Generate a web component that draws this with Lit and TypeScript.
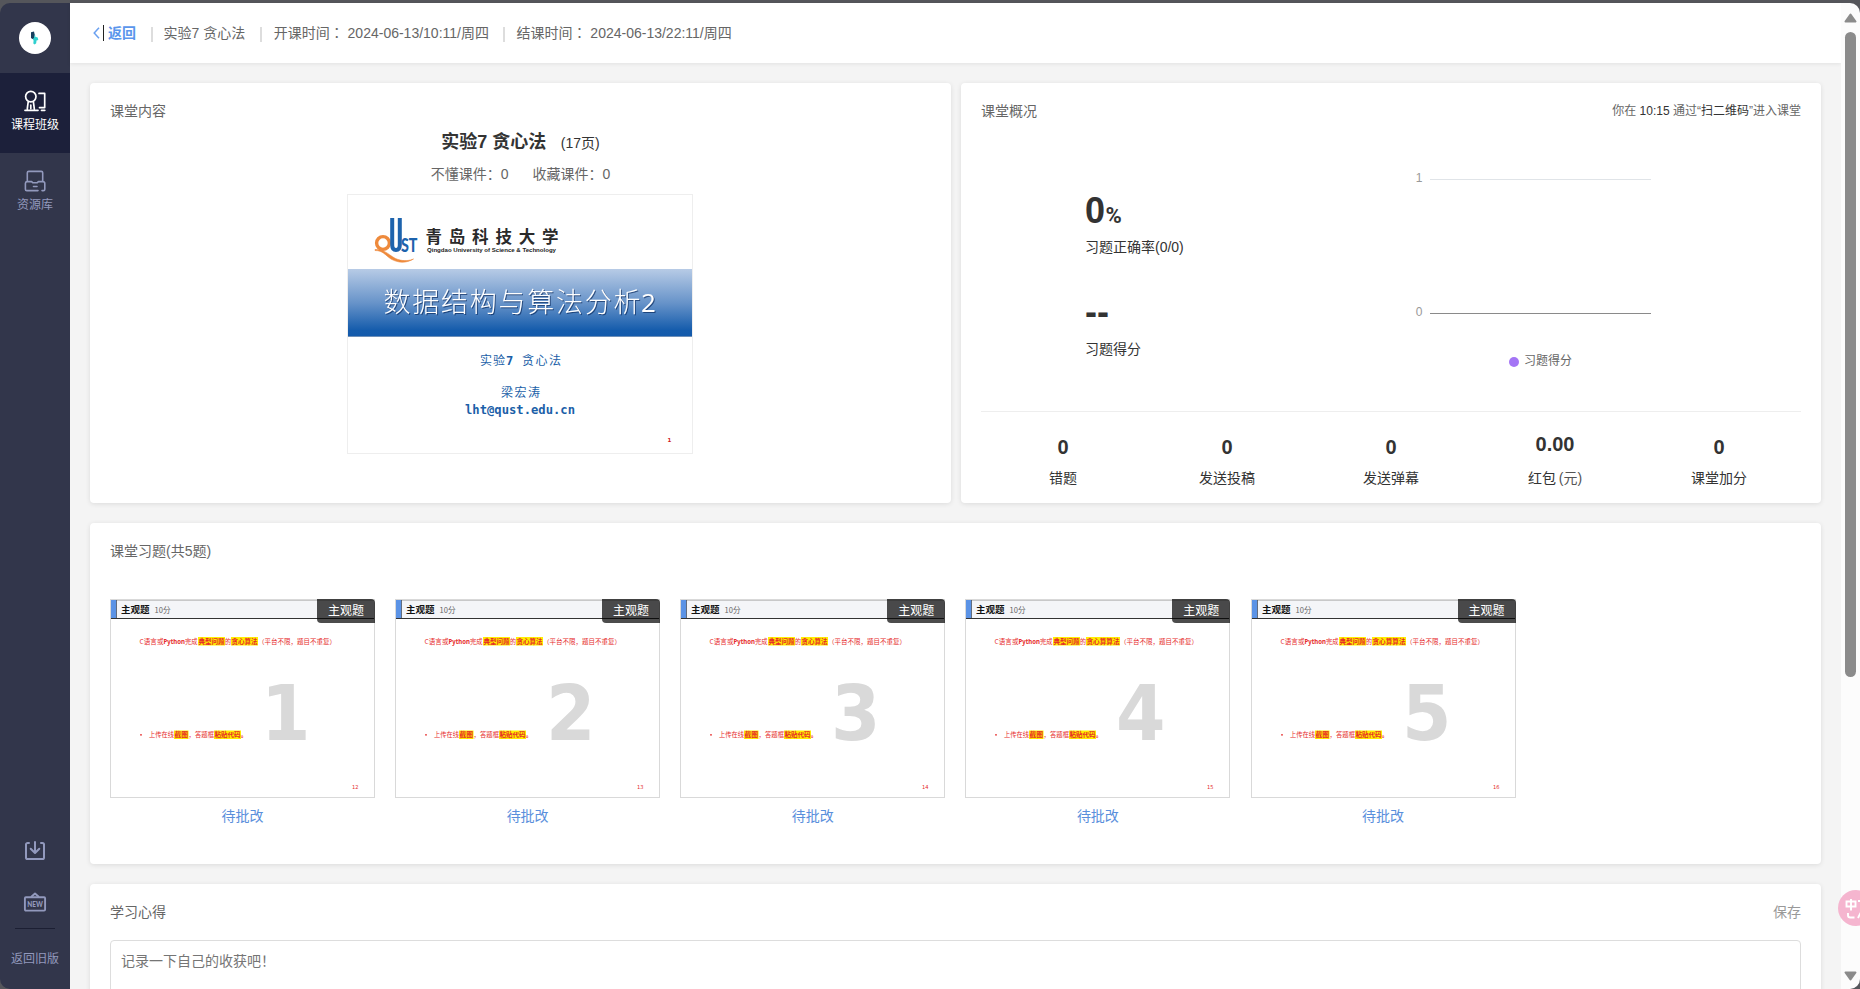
import { LitElement, html, css, svg } from "lit";
import { customElement, property } from "lit/decorators.js";

interface Exercise {
  no: number;
  page: number;
  topic: string;
}

const exercises: Exercise[] = [
  { no: 1, page: 12, topic: "贪心算法" },
  { no: 2, page: 13, topic: "贪心算法" },
  { no: 3, page: 14, topic: "贪心算法" },
  { no: 4, page: 15, topic: "贪心算算法" },
  { no: 5, page: 16, topic: "贪心算算法" },
];

const stats = [
  { value: "0", label: "错题" },
  { value: "0", label: "发送投稿" },
  { value: "0", label: "发送弹幕" },
  { value: "0.00", label: "红包", unit: "(元)" },
  { value: "0", label: "课堂加分" },
];

@customElement("side-bar")
class SideBar extends LitElement {
  static styles = css`
    :host {
      display: flex;
      flex-direction: column;
      align-items: center;
      width: 70px;
      flex: none;
      background: #32364b;
      border-radius: 10px 0 0 10px;
      overflow: hidden;
      color: #9299bd;
      font-size: 12px;
      line-height: 16px;
    }
    svg { display: block; }
    .logo { height: 70px; display: flex; align-items: center; }
    .item {
      width: 70px;
      height: 80px;
      box-sizing: border-box;
      padding-top: 16px;
      display: flex;
      flex-direction: column;
      align-items: center;
      gap: 4px;
    }
    .item.active { background: #1c203a; color: #fff; }
    .bottom {
      margin-top: auto;
      display: flex;
      flex-direction: column;
      align-items: center;
      padding-bottom: 22px;
    }
    .new { margin-top: 29px; }
    .rule { width: 40px; height: 1px; background: #1c1f33; margin: 14px 0 22px; }
  `;
  render() {
    return html`
      <div class="logo">
        <svg width="32" height="32" viewBox="0 0 32 32">
          <circle cx="16" cy="16" r="16" fill="#fff" />
          <path d="M12 10.200l3-.700.800 3.500-.800 3.800-1.500.200-1.500-1z" fill="#173f5f" />
          <path d="M16 12l.300 2.800 2.400.700.600 2.500-1.800.500-.300 2.700-1.500 1.300-1.400-1 .300-3-1-1.500 1.200-.700z" fill="#2fd0cf" />
        </svg>
      </div>
      <div class="item active">
        <svg width="24" height="24" viewBox="0 0 24 24" fill="none" stroke="currentColor" stroke-width="1.700" stroke-linecap="round" stroke-linejoin="round">
          <circle cx="7.800" cy="7.600" r="5.200" />
          <path d="M5.200 12.800Q4.600 17 4.300 19.800M10.400 12.800Q11 17 11.300 19.800M7.800 16v3.500M2 21.300h13M16 4.400h5.700v14.200h-5.200M18.500 21.300h3.300" />
        </svg>
        <span>课程班级</span>
      </div>
      <div class="item">
        <svg width="24" height="24" viewBox="0 0 24 24" fill="none" stroke="currentColor" stroke-width="1.600" stroke-linecap="round" stroke-linejoin="round">
          <path d="M4.300 12.600V3.800a1.400 1.400 0 0 1 1.400-1.400h12.600a1.400 1.400 0 0 1 1.400 1.400v8.800M4 12.600h4.600l1.400 1.200h4l1.400-1.200H20a1.800 1.800 0 0 1 1.800 1.800v5.800a1.400 1.400 0 0 1-1.400 1.400h-1.400M15 21.600H3.800a1.400 1.400 0 0 1-1.400-1.400v-5.800A1.800 1.800 0 0 1 4 12.600M10.500 17.500h3.500" />
        </svg>
        <span>资源库</span>
      </div>
      <div class="bottom">
        <svg width="22" height="22" viewBox="0 0 22 22" fill="none" stroke="currentColor" stroke-width="2" stroke-linecap="round" stroke-linejoin="round">
          <path d="M5 3H3.600A1.600 1.600 0 0 0 2 4.600V17.400A1.600 1.600 0 0 0 3.600 19H18.400A1.600 1.600 0 0 0 20 17.400V4.600A1.600 1.600 0 0 0 18.400 3H17M11 2v10.500M6.700 8.700l4.300 4.300 4.300-4.300" />
        </svg>
        <svg class="new" width="24" height="23" viewBox="0 0 24 23">
          <g fill="none" stroke="currentColor" stroke-width="1.900" stroke-linejoin="round">
            <rect x="1.900" y="6.200" width="20.200" height="13.400" rx="1" />
            <path d="M8 6l4-3.500L16 6" />
          </g>
          <text x="4.200" y="15.600" textLength="15.600" lengthAdjust="spacingAndGlyphs" font-family="Lato, sans-serif" font-size="7.600" font-weight="900" fill="currentColor">NEW</text>
        </svg>
        <div class="rule"></div>
        <span>返回旧版</span>
      </div>
    `;
  }
}

@customElement("cover-slide")
class CoverSlide extends LitElement {
  static styles = css`
    :host { display: block; width: 344px; height: 258px; border: 1px solid #eee; background: #fff; margin-right: 1px; }
    svg { display: block; }
    .kai { font-family: "KaiTi", "Noto Sans CJK SC", sans-serif; }
    .deep { fill: #1b5fa8; }
    .title { fill: #fff; filter: drop-shadow(1px 1px 0.500px rgba(0, 30, 80, 0.600)); }
    .light { font-weight: 300; }
  `;
  render() {
    return html`
      <svg width="344" height="258" viewBox="0 0 344 258">
        <defs>
          <linearGradient id="band" x1="0" y1="0" x2="0" y2="1">
            <stop offset="0" stop-color="#b7cbe6" />
            <stop offset="0.500" stop-color="#6793c9" />
            <stop offset="0.900" stop-color="#155cac" />
            <stop offset="1" stop-color="#135aab" />
          </linearGradient>
        </defs>
        <g fill="none">
          <circle cx="35" cy="48" r="6.400" stroke="#ee8a3c" stroke-width="3.400" />
          <path d="M27 54.500C38 54 42 62 50 64.500 56 66.500 62 65.500 65.500 64 58 68.500 50 68 43 64 37 60 35 55.500 27 55.500z" fill="#ee8a3c" stroke="#ee8a3c" stroke-width=".600" />
          <path d="M44.200 23v27q0 5 3.800 5t3.800-5V23" stroke="#1d63ad" stroke-width="4" />
        </g>
        <text x="53" y="56.500" textLength="16.500" lengthAdjust="spacingAndGlyphs" font-family="Lato, sans-serif" font-weight="900" font-size="19" fill="#1d63ad">ST</text>
        <text class="kai" x="77.500" y="47.500" textLength="133" font-size="16.500" font-weight="700" fill="#2a2a2a">青岛科技大学</text>
        <text x="79" y="56.500" textLength="129" lengthAdjust="spacingAndGlyphs" font-family="Liberation Sans, sans-serif" font-weight="700" font-size="5.200" fill="#222">Qingdao University of Science &amp; Technology</text>
        <rect y="74" width="344" height="68" fill="url(#band)" />
        <rect y="141" width="344" height="1" fill="#6d8fb8" />
        <text class="kai title light" x="35.500" y="116.500" textLength="257" font-size="27">数据结构与算法分析</text>
        <text class="title" x="293" y="117" font-family="Open Sans, sans-serif" font-weight="400" font-size="26">2</text>
        <g class="deep kai" font-size="12">
          <text x="132" y="170" textLength="25">实验</text>
          <text x="158" y="170" textLength="7.300" lengthAdjust="spacingAndGlyphs" font-family="DejaVu Sans Mono, monospace" font-weight="700" font-size="12">7</text>
          <text x="174" y="170" textLength="39">贪心法</text>
          <text x="153" y="202" textLength="39">梁宏涛</text>
        </g>
        <text class="deep" x="117" y="218.500" textLength="110" lengthAdjust="spacingAndGlyphs" font-family="DejaVu Sans Mono, monospace" font-weight="700" font-size="12.500">lht@qust.edu.cn</text>
        <text x="319.500" y="247" font-family="DejaVu Sans, sans-serif" font-weight="700" font-size="5.500" fill="#d02020">1</text>
      </svg>
    `;
  }
}

@customElement("exercise-card")
class ExerciseCard extends LitElement {
  static styles = css`
    :host { display: flex; flex-direction: column; width: 265px; }
    .thumb { position: relative; height: 199px; box-sizing: border-box; border: 1px solid #d9d9d9; }
    svg { display: block; }
    .badge {
      position: absolute;
      top: -1px;
      right: -1px;
      width: 58px;
      height: 24px;
      box-sizing: border-box;
      line-height: 24px;
      text-align: center;
      font-size: 12px;
      color: #fff;
      background: rgba(0, 0, 0, 0.700);
      border-radius: 0 4px 0 4px;
    }
    .cjk { font-family: "Noto Sans CJK SC", sans-serif; }
    .red { fill: #e62a2a; }
    .mark { fill: #ffee00; }
    .state { margin-top: 9px; line-height: 18px; text-align: center; font-size: 14px; color: #5a8fdc; }
  `;
  @property({ attribute: false }) item!: Exercise;
  render() {
    const { no, page, topic } = this.item;
    const extra = (topic.length - 4) * 7;
    const seg = (x: number, y: number, w: number, t: string, bold = false) => svg`
      <text x=${x} y=${y} textLength=${w} lengthAdjust="spacingAndGlyphs" font-weight=${bold ? 700 : 400}>${t}</text>`;
    return html`
      <div class="thumb">
        <svg width="263" height="197" viewBox="0 0 263 197">
          <rect width="263" height="197" fill="#fff" />
          <rect width="263" height="18" fill="#f4f5f8" />
          <rect width="263" height="1" fill="#aaa" opacity=".6" />
          <rect y="18" width="263" height="1" fill="#333" />
          <rect width="5.500" height="18" fill="#5b93e6" />
          <rect x="5" width="1" height="19" fill="#333" opacity=".6" />
          <g class="cjk">
            <text x="10" y="12.500" textLength="28.500" lengthAdjust="spacingAndGlyphs" font-size="9.500" font-weight="700" fill="#111">主观题</text>
            <text x="43.500" y="13" textLength="16" lengthAdjust="spacingAndGlyphs" font-size="8" fill="#666">10分</text>
          </g>
          <rect class="mark" x="87" y="37" width="27" height="8.500" />
          <rect class="mark" x="120" y="37" width=${27 + extra} height="8.500" />
          <rect class="mark" x="63" y="130.500" width="14.500" height="8.500" />
          <rect class="mark" x="103" y="130.500" width="27" height="8.500" />
          <g class="cjk red" font-size="6.300">
            ${seg(28.5, 43.5, 24, "C语言或")}
            <text x="52.500" y="43.500" textLength="21.500" lengthAdjust="spacingAndGlyphs" font-family="Noto Sans, sans-serif" font-weight="700">Python</text>
            ${seg(74, 43.5, 12.5, "完成")}
            ${seg(87.5, 43.5, 26, "典型问题", true)}
            ${seg(114, 43.5, 6, "的")}
            ${seg(120.5, 43.5, 26 + extra, topic, true)}
            ${seg(147 + extra, 43.5, 78, "（平台不限，题目不重复）")}
            <circle cx="30" cy="134.800" r=".9" />
            ${seg(38, 137, 25, "上传在线")}
            ${seg(63.5, 137, 13.5, "截图", true)}
            ${seg(77.5, 137, 25.5, "，答题框")}
            ${seg(103.5, 137, 26, "粘贴代码", true)}
            ${seg(130, 137, 6, "。", true)}
          </g>
          <text x="150" y="140" textLength="49.500" lengthAdjust="spacingAndGlyphs" font-family="DejaVu Sans, sans-serif" font-weight="700" font-size="77" fill="#d9d9d9">${no}</text>
          <text x="241" y="189" textLength="6.500" lengthAdjust="spacingAndGlyphs" font-family="DejaVu Sans, sans-serif" font-size="5.500" class="red">${page}</text>
        </svg>
        <div class="badge">主观题</div>
      </div>
      <div class="state">待批改</div>
    `;
  }
}

@customElement("app-root")
class AppRoot extends LitElement {
  static styles = css`
    :host {
      display: flex;
      width: 1860px;
      height: 989px;
      box-sizing: border-box;
      padding-top: 3px;
      overflow: hidden;
      position: relative;
      background: #55565b;
      font-family: "Liberation Sans", "Noto Sans CJK SC", sans-serif;
      font-size: 14px;
      line-height: 18px;
      color: #333;
    }
    svg { display: block; }
    .main { width: 1771px; display: flex; flex-direction: column; background: #f4f4f4; }
    header {
      height: 60px;
      flex: none;
      display: flex;
      align-items: center;
      box-sizing: border-box;
      padding: 0 23px;
      background: #fff;
      color: #666;
      box-shadow: 0 1px 4px rgba(0, 0, 0, 0.080);
      white-space: pre;
    }
    .caret { width: 1px; height: 16px; background: #222; margin: 0 4px 0 3px; }
    .back { font-weight: 700; color: #5a96ec; }
    .sep { width: 2px; height: 15px; background: #ddd; margin: 3px 11px 0 14.500px; }
    .sep.wide { margin-left: 15px; margin-right: 11.500px; }
    .colon { font-family: "Noto Sans CJK TC", sans-serif; line-height: 1; }
    .content { padding: 20px; display: flex; flex-direction: column; gap: 20px; }
    .row { display: grid; grid-template-columns: 861px 860px; grid-template-rows: 420px; gap: 10px; }
    .card {
      background: #fff;
      border-radius: 4px;
      box-shadow: 0 1px 5px rgba(0, 0, 0, 0.100);
      box-sizing: border-box;
      padding: 20px;
    }
    .head { display: flex; justify-content: space-between; color: #666; height: 18px; line-height: 16px; }
    .entry { font-size: 12px; }
    .entry b { font-weight: 400; color: #333; }
    .lesson { display: flex; flex-direction: column; align-items: center; }
    .name { display: flex; align-items: baseline; gap: 14.500px; margin-top: 10px; line-height: 22px; height: 24px; }
    .name strong { font-size: 18px; }
    .marks { display: flex; gap: 24px; margin: 11px 0 10px; line-height: 16px; height: 18px; color: #666; }
    .overview { display: flex; height: 290px; border-bottom: 1px solid #eee; }
    .scores { width: 420px; box-sizing: border-box; padding: 70px 0 0 104px; }
    .big { font: 700 36px/40px "Liberation Sans", sans-serif; height: 40px; }
    .big small { font: 700 22px "Roboto", sans-serif; margin-left: 0.500px; }
    .scores p { margin: 7px 0 36px; }
    .scores p.last { margin-top: 8px; }
    .stats { display: grid; grid-template-columns: repeat(5, 1fr); text-align: center; padding-top: 23px; }
    .stats b { display: block; font-size: 20px; line-height: 24px; height: 24px; }
    .stats .money b { margin-top: -3px; height: 27px; }
    .stats span { display: block; margin-top: 10px; }
    .stats i { font-style: normal; color: #555; margin-left: -1px; }
    .exercises { height: 341px; }
    .grid { display: flex; gap: 20.130px; margin-top: 38px; }
    .notes { height: 300px; }
    .save { color: #999; }
    .note {
      margin-top: 18px;
      height: 200px;
      border: 1px solid #ddd;
      border-radius: 4px;
      padding: 11px 10px;
      color: #757575;
    }
    .scroll {
      width: 19px;
      height: 986px;
      background: #fcfcfc;
      border-radius: 0 10px 10px 0;
      display: flex;
      flex-direction: column;
      align-items: center;
      box-sizing: border-box;
      padding: 10px 0 8px;
    }
    .track { flex: 1; padding-top: 9px; }
    .thumb { width: 11px; height: 645px; border-radius: 6px; background: #8b8b8b; }
    .float { position: absolute; left: 1838px; top: 890px; }
  `;
  render() {
    return html`
      <side-bar></side-bar>
      <div class="main">
        <header>
          <svg width="7" height="12" viewBox="0 0 7 12" fill="none" stroke="#6aa0f0" stroke-width="1.500"><path d="M6 .700L1.200 6 6 11.300" /></svg>
          <div class="caret"></div>
          <span class="back">返回</span>
          <div class="sep"></div>
          <span>实验7 贪心法</span>
          <div class="sep wide"></div>
          <span>开课时间<span class="colon">：</span> 2024-06-13/10:11/周四</span>
          <div class="sep"></div>
          <span>结课时间<span class="colon">：</span> 2024-06-13/22:11/周四</span>
        </header>
        <div class="content">
          <div class="row">
            <section class="card">
              <div class="head">课堂内容</div>
              <div class="lesson">
                <div class="name"><strong>实验7 贪心法</strong><span>(17页)</span></div>
                <div class="marks"><span>不懂课件：0</span><span>收藏课件：0</span></div>
                <cover-slide></cover-slide>
              </div>
            </section>
            <section class="card">
              <div class="head">
                <span>课堂概况</span>
                <span class="entry">你在 <b>10:15</b> 通过“<b>扫二维码</b>”进入课堂</span>
              </div>
              <div class="overview">
                <div class="scores">
                  <div class="big">0<small>%</small></div>
                  <p>习题正确率(0/0)</p>
                  <div class="big">--</div>
                  <p class="last">习题得分</p>
                </div>
                <svg width="400" height="289" viewBox="0 0 400 289" font-size="12">
                  <g fill="#999" text-anchor="middle">
                    <text x="18" y="61">1</text>
                    <text x="18" y="195">0</text>
                  </g>
                  <rect x="29" y="58" width="221" height="1" fill="#e0e4e8" />
                  <rect x="29" y="192" width="221" height="1" fill="#8a8a8a" />
                  <circle cx="113" cy="241" r="5" fill="#a475f5" />
                  <text x="123" y="244" fill="#666">习题得分</text>
                </svg>
              </div>
              <div class="stats">
                ${stats.map((s) => html`<div class=${s.unit ? "money" : ""}><b>${s.value}</b><span>${s.label}${s.unit ? html` <i>${s.unit}</i>` : ""}</span></div>`)}
              </div>
            </section>
          </div>
          <section class="card exercises">
            <div class="head">课堂习题(共5题)</div>
            <div class="grid">${exercises.map((e) => html`<exercise-card .item=${e}></exercise-card>`)}</div>
          </section>
          <section class="card notes">
            <div class="head"><span>学习心得</span><span class="save">保存</span></div>
            <div class="note">记录一下自己的收获吧！</div>
          </section>
        </div>
      </div>
      <div class="scroll">
        <svg width="13" height="10" viewBox="0 0 13 10"><path d="M6.500 1.500L11.500 8.500H1.500z" fill="#8b8b8b" stroke="#8b8b8b" stroke-width="2" stroke-linejoin="round" /></svg>
        <div class="track"><div class="thumb"></div></div>
        <svg width="13" height="10" viewBox="0 0 13 10"><path d="M6.500 8.500L11.500 1.500H1.500z" fill="#8b8b8b" stroke="#8b8b8b" stroke-width="2" stroke-linejoin="round" /></svg>
      </div>
      <svg class="float" width="36" height="36" viewBox="0 0 36 36">
        <circle cx="18" cy="18" r="18" fill="#f5b5cf" />
        <g fill="none" stroke="#fff" stroke-width="1.900">
          <path d="M8.500 11.500h9v5h-9zM13 9v11.500M20 11h6M10 23v2.500q0 2 2.500 2h4M24 20l-4 8" />
        </g>
      </svg>
    `;
  }
}
